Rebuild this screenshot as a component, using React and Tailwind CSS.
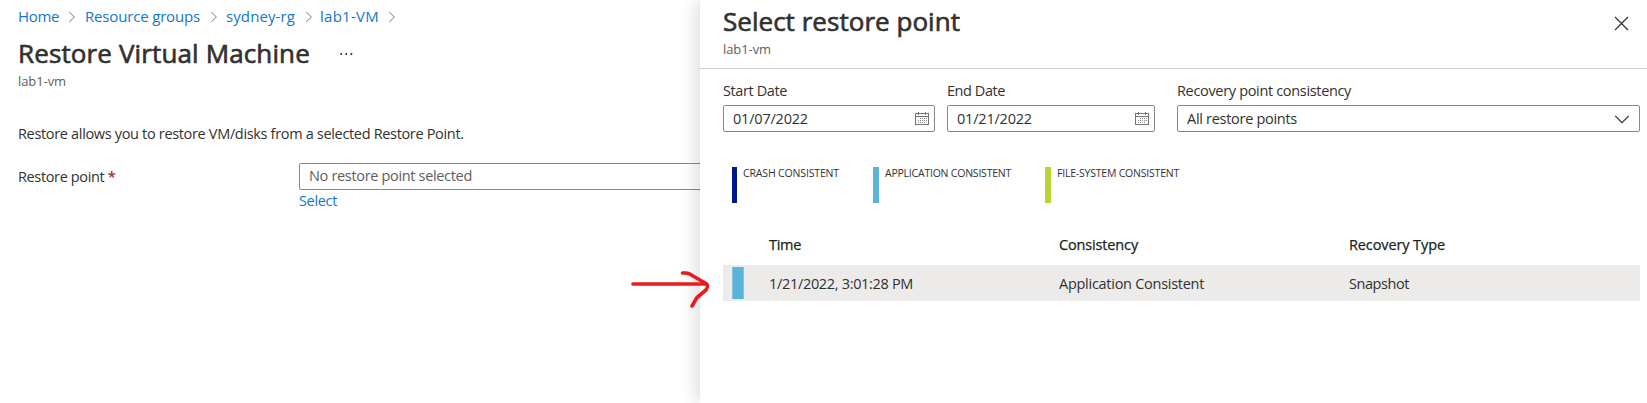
function Chevron() {
  return (
    <svg width="8" height="12" viewBox="0 0 8 12" className="mt-px shrink-0" fill="none" stroke="#7a7876" strokeWidth="1">
      <path d="M1.2 1 6.4 6 1.2 11" />
    </svg>
  );
}

function CalendarIcon() {
  return (
    <svg width="14" height="13" viewBox="0 0 14 13" shapeRendering="crispEdges" fill="none">
      <path d="M.5 1.5h13v11H.5z" stroke="#767472" />
      <path d="M1 4.5h12" stroke="#767472" />
      <path d="M3.5 0v3M10.5 0v3" stroke="#767472" />
      <path d="M5 6.5h7M3 8.5h9M3 10.5h7" stroke="#8a8886" strokeDasharray="1 1" />
    </svg>
  );
}

const crumbs = [
  { label: "Home", width: "w-[67px]", gap: "gap-[9px]", tracking: "tracking-[-0.35px]" },
  { label: "Resource groups", width: "w-[141px]", gap: "gap-[10px]", tracking: "tracking-[-0.17px]" },
  { label: "sydney-rg", width: "w-[94px]", gap: "gap-[10px]", tracking: "tracking-[0.1px]" },
  { label: "lab1-VM", width: "w-[80px]", gap: "gap-[9px]", tracking: "tracking-[0.27px]" },
];

function DateField({ label, value, width, tracking }) {
  return (
    <div className={width}>
      <div className={`leading-5 ${tracking}`}>{label}</div>
      <div className="mt-1 flex h-[27px] items-center justify-between rounded-[2px] border border-[#8a8886] pl-[9px] pr-[5px]">
        <span className="tracking-[-0.2px]">{value}</span>
        <CalendarIcon />
      </div>
    </div>
  );
}

function Legend({ color, width, tracking, children }) {
  return (
    <div className={`flex gap-[6px] ${width}`}>
      <div className={`h-9 shrink-0 ${color}`} />
      <span className={`text-[10.5px] leading-3 whitespace-nowrap ${tracking}`}>{children}</span>
    </div>
  );
}

export default function App() {
  return (
    <div className="relative h-[403px] w-[1647px] overflow-hidden bg-white font-['Open_Sans','Noto_Sans',sans-serif] text-[14.5px] whitespace-nowrap text-[#323130]">
      <main className="pt-[6px] pl-[18px]">
        <nav className="flex h-5 text-[15px] leading-5 text-[#0f78d0]">
          {crumbs.map((c) => (
            <div key={c.label} className={`flex shrink-0 items-center ${c.width} ${c.gap}`}>
              <span className={c.tracking}>{c.label}</span>
              <Chevron />
            </div>
          ))}
        </nav>
        <div className="mt-[9px] flex h-9 items-center">
          <h1 className="w-[322px] text-[26px] leading-9 tracking-[0.13px] [-webkit-text-stroke:0.65px_#323130]">Restore Virtual Machine</h1>
          <svg width="13" height="2" viewBox="0 0 13 2" fill="#201f1e" className="mt-[2px]">
            <circle cx="1.2" cy="1" r=".95" />
            <circle cx="6.3" cy="1" r=".95" />
            <circle cx="11.4" cy="1" r=".95" />
          </svg>
        </div>
        <div className="text-[13px] leading-5 tracking-[-0.09px] text-[#605e5c]">lab1-vm</div>
        <p className="mt-[33px] leading-5 tracking-[-0.33px]">
          Restore allows you to restore VM/disks from a selected Restore Point.
        </p>
        <div className="mt-[19px] flex">
          <label className="w-[281px] leading-[28px] tracking-[-0.36px]">
            Restore point <span className="font-semibold text-[#a4262c]">*</span>
          </label>
          <div>
            <div className="h-[27px] w-[500px] rounded-[2px] border border-[#8a8886] pl-[9px] leading-[23px] tracking-[-0.33px] text-[#605e5c]">
              No restore point selected
            </div>
            <a className="block leading-[22px] tracking-[-0.34px] text-[#0f78d0]">Select</a>
          </div>
        </div>
      </main>

      <aside className="absolute top-0 left-[700px] h-[403px] w-[947px] bg-white shadow-[0_0_20px_rgba(0,0,0,0.2)]">
        <header className="flex h-[69px] justify-between border-b border-[#d2d0ce] pt-[3px] pr-[18px] pl-[23px]">
          <div>
            <h2 className="text-[26px] leading-9 tracking-[0.03px] [-webkit-text-stroke:0.65px_#323130]">Select restore point</h2>
            <div className="text-[13px] leading-5 tracking-[-0.09px] text-[#605e5c]">lab1-vm</div>
          </div>
          <svg width="15" height="15" viewBox="0 0 15 15" className="mt-[13px]" fill="none" stroke="#323130" strokeWidth="1.2">
            <path d="M1 1 14 14M14 1 1 14" />
          </svg>
        </header>

        <div className="flex pt-3 pl-[23px]">
          <DateField label="Start Date" value="01/07/2022" width="w-[212px]" tracking="tracking-[-0.39px]" />
          <div className="ml-3">
            <DateField label="End Date" value="01/21/2022" width="w-[208px]" tracking="tracking-[-0.44px]" />
          </div>
          <div className="ml-[22px] w-[463px]">
            <div className="leading-5 tracking-[-0.33px]">Recovery point consistency</div>
            <div className="mt-1 flex h-[27px] items-center justify-between rounded-[2px] border border-[#8a8886] pr-[9px] pl-[9px]">
              <span className="tracking-[-0.29px]">All restore points</span>
              <svg width="16" height="9" viewBox="0 0 16 9" className="mt-px" fill="none" stroke="#323130" strokeWidth="1.2">
                <path d="M1.2 .8 8 7.6 14.8 .8" />
              </svg>
            </div>
          </div>
        </div>

        <div className="mt-[35px] flex pl-8">
          <Legend color="w-[5px] bg-[#00188f]" width="w-[141px]" tracking="tracking-[-0.15px]">CRASH CONSISTENT</Legend>
          <Legend color="w-[6px] bg-[#59b4d9]" width="w-[172px]" tracking="tracking-[-0.22px]">APPLICATION CONSISTENT</Legend>
          <Legend color="w-[6px] bg-[#b8d432]" width="w-[140px]" tracking="tracking-[-0.21px]">FILE-SYSTEM CONSISTENT</Legend>
        </div>

        <div className="mt-8 ml-[23px] w-[917px]">
          <div className="grid h-[30px] grid-cols-[46px_290px_290px_1fr] leading-5 text-[#201f1e] [-webkit-text-stroke:0.25px_#201f1e]">
            <span />
            <span className="tracking-[-0.3px]">Time</span>
            <span className="tracking-[-0.15px]">Consistency</span>
            <span className="tracking-[-0.11px]">Recovery Type</span>
          </div>
          <div className="grid h-9 grid-cols-[46px_290px_290px_1fr] items-center bg-[#edebe9] leading-5">
            <div className="ml-[9px] h-8 w-3 border-x border-[#84c6e2] bg-[#59b4d9]" />
            <span className="pt-px tracking-[-0.32px]">1/21/2022, 3:01:28 PM</span>
            <span className="pt-px tracking-[-0.27px]">Application Consistent</span>
            <span className="pt-px tracking-[-0.43px]">Snapshot</span>
          </div>
        </div>
      </aside>

      <svg className="absolute top-[266px] left-[628px]" width="86" height="46" viewBox="0 0 86 46" fill="none" stroke="#e81c1c" strokeWidth="3.6" strokeLinecap="round" strokeLinejoin="round">
        <path d="M5 18H78" />
        <path d="M54.5 7H58C61 7 63 8.500 65 10L78 17.500C80.500 19.500 80 21 78 24L69 31.500L64 40" />
      </svg>
    </div>
  );
}
